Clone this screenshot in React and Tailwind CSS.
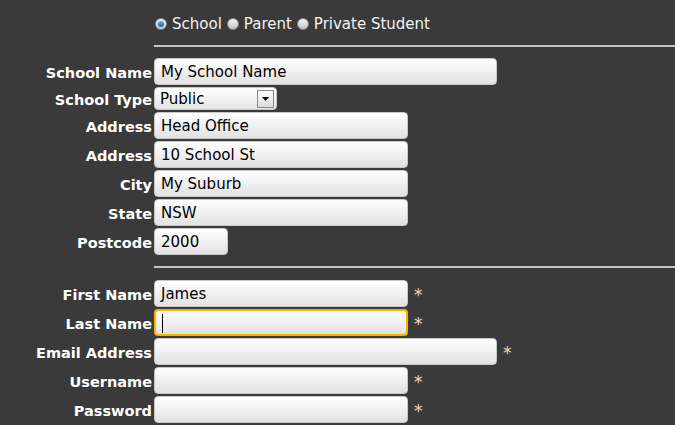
const font = { fontFamily: '"DejaVu Sans", Verdana, sans-serif' };

function Radio({ checked, label }) {
  return (
    <span className="flex items-center gap-[5px]">
      <span className="flex h-[12px] w-[12px] items-center justify-center rounded-full border border-[#8a8a8a] bg-gradient-to-b from-[#f4f4f4] to-[#c4c4c4]">
        {checked && <span className="h-[6px] w-[6px] rounded-full bg-gradient-to-b from-[#5ab0ea] to-[#1565a8]" />}
      </span>
      <span className="pt-[2px]">{label}</span>
    </span>
  );
}

function Label({ children }) {
  return <label className="w-[154px] shrink-0 pr-[2px] pt-[3px] text-right text-[14.5px] font-bold leading-none text-white">{children}</label>;
}

function Field({ label, value = '', width, focused, required }) {
  return (
    <div className="flex h-[27px] items-center">
      <Label>{label}</Label>
      <div
        className={`flex h-[27px] items-center rounded-[4px] bg-gradient-to-b from-white to-[#e2e2e2] pl-[6px] pt-[2px] leading-none text-black ${
          focused ? 'border-2 border-[#f5b300] pl-[5px]' : 'border border-[#c8c8c8]'
        }`}
        style={{ width }}
      >
        {focused ? <span className="h-[19px] w-px bg-black" /> : value}
      </div>
      {required && <span className="ml-[6px] pt-[4px] text-[17px] leading-none text-[#ecdcbc]">*</span>}
    </div>
  );
}

export default function App() {
  return (
    <div className="h-[425px] w-[675px] overflow-hidden bg-[#3a3a3a] text-[15px] text-[#f2f2f2]" style={font}>
      <div className="flex h-[45px] items-center gap-[5px] pl-[155px] pt-[2px]">
        <Radio checked label="School" />
        <Radio label="Parent" />
        <Radio label="Private Student" />
      </div>
      <div className="ml-[154px] h-[2px] bg-[#c4c4c4]" />

      <div className="mt-[11px] flex flex-col gap-[2px]">
        <Field label="School Name" value="My School Name" width={343} />
        <div className="flex h-[23px] items-center">
          <Label>School Type</Label>
          <div className="flex h-[23px] w-[123px] items-center justify-between rounded-[4px] border border-[#c8c8c8] bg-gradient-to-b from-white to-[#e6e6e6] pl-[5px] pr-[2px] leading-none text-black">
            <span className="pt-[2px]">Public</span>
            <span className="flex h-[18px] w-[17px] items-center justify-center border border-[#8a8a8a] bg-gradient-to-b from-white to-[#dcdcdc]">
              <svg width="7" height="4" viewBox="0 0 7 4"><path d="M0 0h7L3.5 4z" fill="#000" /></svg>
            </span>
          </div>
        </div>
        <Field label="Address" value="Head Office" width={254} />
        <Field label="Address" value="10 School St" width={254} />
        <Field label="City" value="My Suburb" width={254} />
        <Field label="State" value="NSW" width={254} />
        <Field label="Postcode" value="2000" width={74} />
      </div>

      <div className="ml-[154px] mt-[11px] h-[2px] bg-[#c4c4c4]" />

      <div className="mt-[12px] flex flex-col gap-[2px]">
        <Field label="First Name" value="James" width={254} required />
        <Field label="Last Name" width={254} focused required />
        <Field label="Email Address" width={343} required />
        <Field label="Username" width={254} required />
        <Field label="Password" width={254} required />
        <Field label="" width={254} />
      </div>
    </div>
  );
}
